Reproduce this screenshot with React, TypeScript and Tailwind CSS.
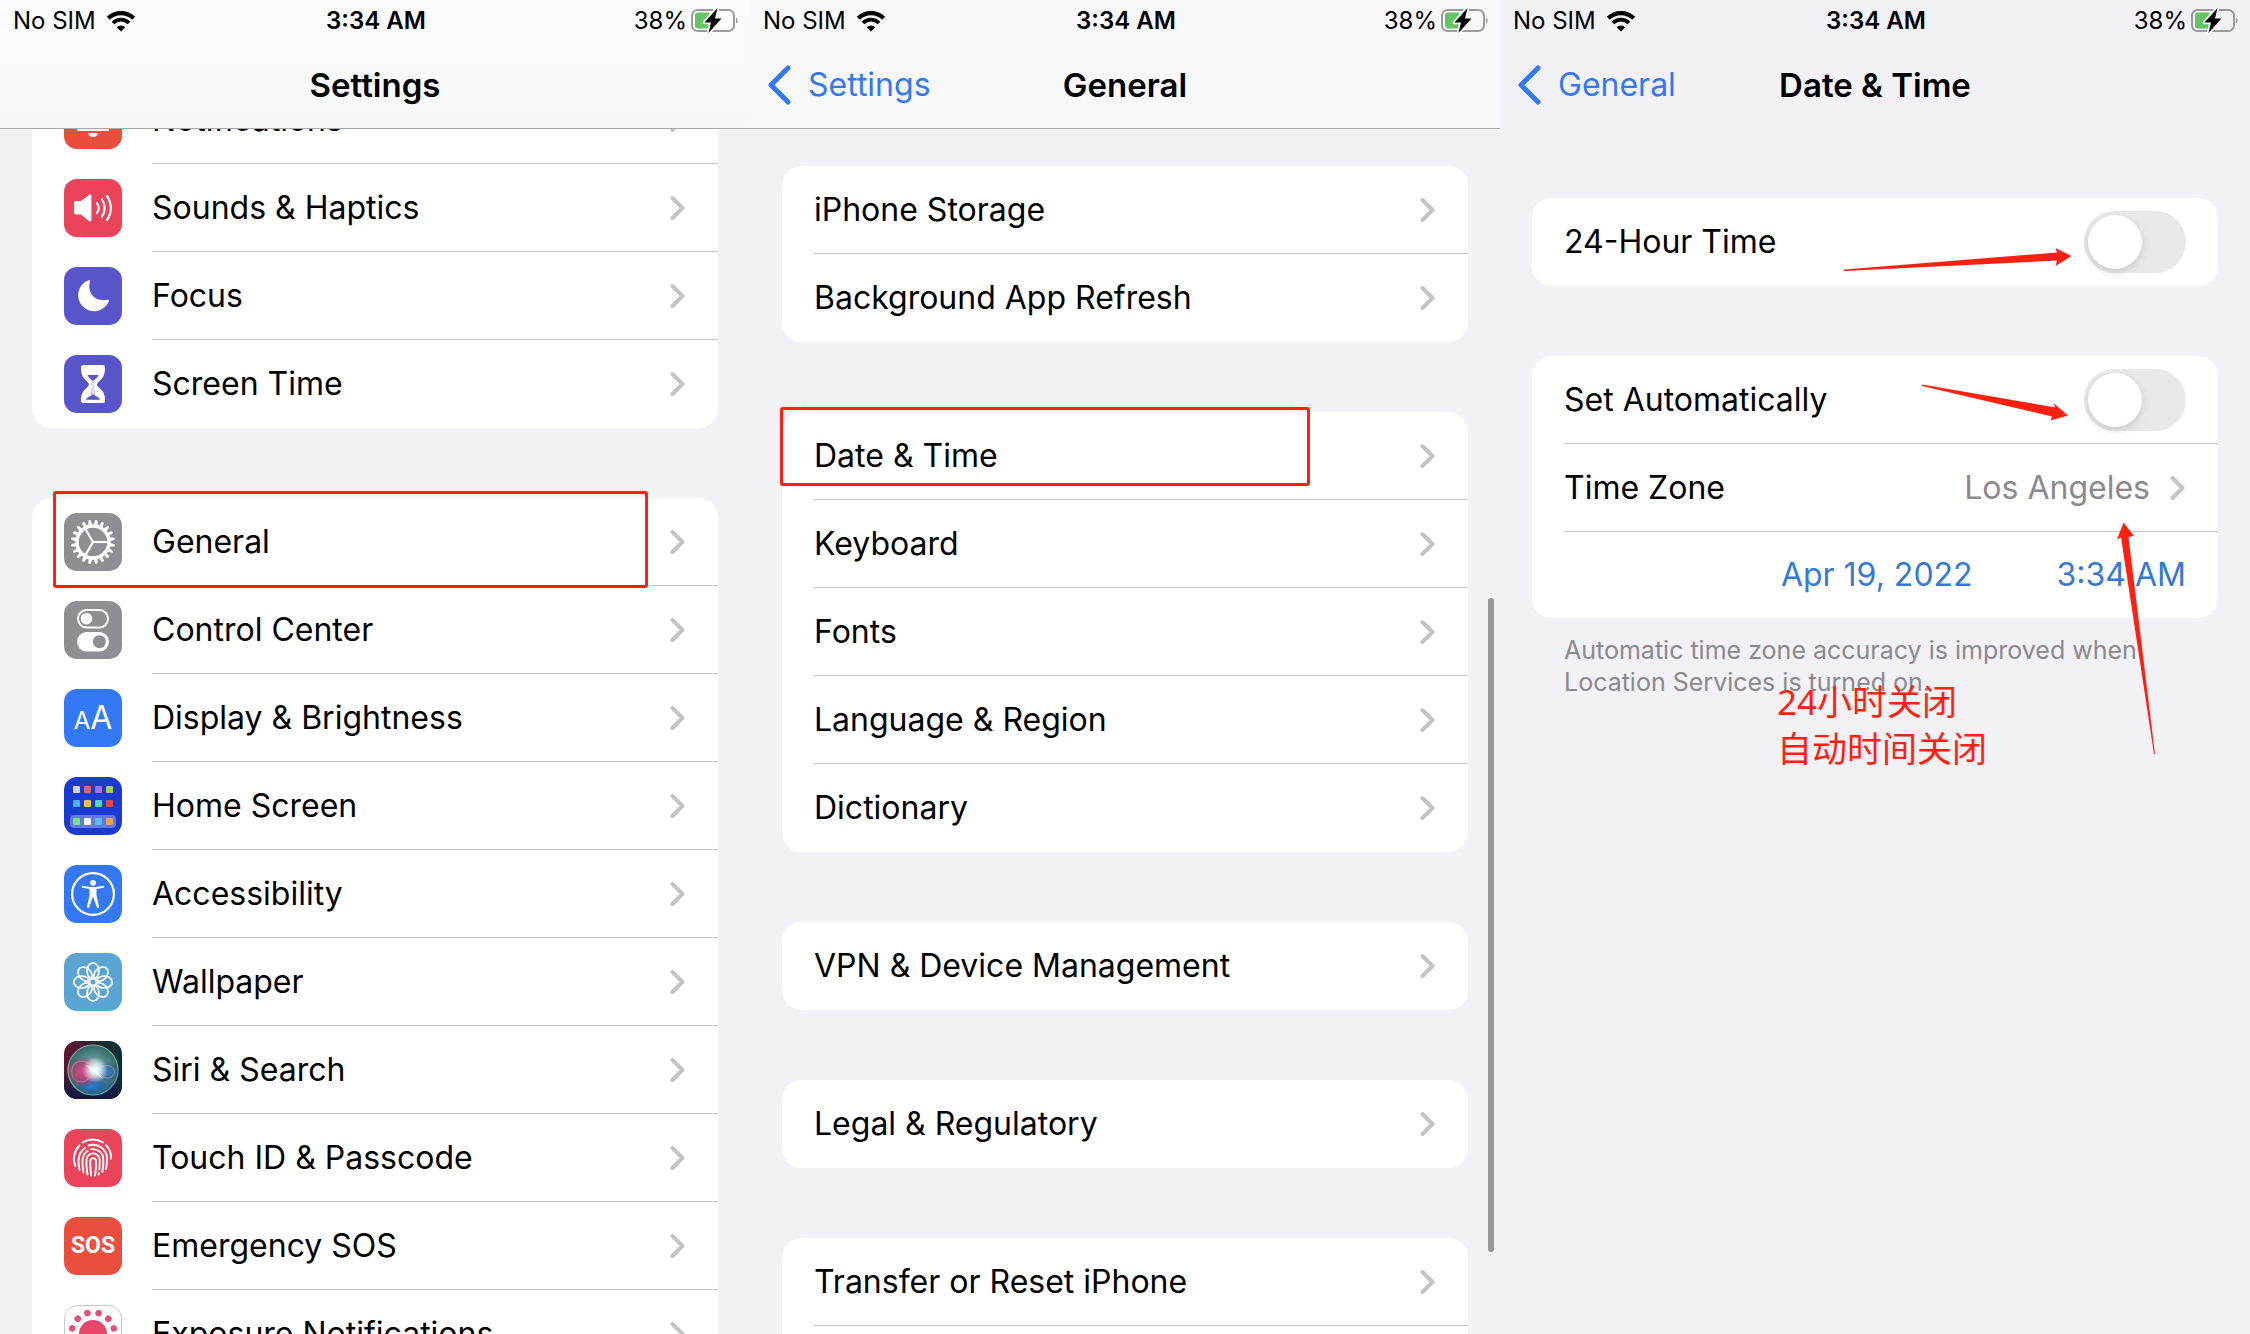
import React from "react";

const TEETH = Array.from({ length: 20 }, (_, i) => i * 18);
const PETALS = Array.from({ length: 8 }, (_, i) => i * 45);
const DOTS = Array.from({ length: 12 }, (_, i) => 15 + i * 30);
const APP_TILES = [
  ["#d3d6e6", "#ec5f6b", "#b06cf5", "#a9d052"],
  ["#4fb0f6", "#f8c23f", "#56d8a4", "#e8473f"],
  ["#74e97c", "#ffffff", "#58bdf2", "#f0a04f"],
];
const TILE_Y = [9, 23, 41];

function IconTile({ bg, children }: { bg: string; children?: React.ReactNode }) {
  return (
    <svg viewBox="0 0 58 58" className="size-[58px] shrink-0" aria-hidden="true" fill="none">
      <rect width="58" height="58" rx="13" fill={bg} />
      {children}
    </svg>
  );
}

const icons = {
  notifications: (
    <IconTile bg="#eb4d3d">
      <path d="M13 40v-3l5-6V23a11 11 0 0 1 22 0v8l5 6v3z" fill="#fff" />
      <path d="M24 42h10a5 4 0 0 1-10 0z" fill="#fff" />
    </IconTile>
  ),
  sounds: (
    <IconTile bg="#eb445a">
      <path d="M12 22h5l8-6c1-.8 2.400-.4 2.400 1v24c0 1.400-1.400 1.800-2.400 1l-8-6.500h-5c-1.400 0-2-.8-2-2V24c0-1.200.6-2 2-2z" fill="#fff" />
      <g stroke="#fff" strokeWidth="2.200" strokeLinecap="round">
        <path d="M33 24a9 9 0 0 1 0 10" />
        <path d="M38 20.500a15 15 0 0 1 0 17" />
        <path d="M43 17a21 21 0 0 1 0 24" />
      </g>
    </IconTile>
  ),
  focus: (
    <IconTile bg="#5855cb">
      <path d="M24.500 13.200c.9-.4 1.900.2 1.500 1.300-3.400 11.500 5.600 21 17.400 18.200 1.100-.3 1.900.5 1.500 1.600A16 16 0 1 1 24.500 13.200z" fill="#fff" />
    </IconTile>
  ),
  screenTime: (
    <IconTile bg="#5855cb">
      <path d="M19.500 10h19c1.700 0 2.500 1 2.500 2.500 0 7-2 10.500-5.500 13.500-3.300 2.800-3.300 4.200 0 7C39 36 41 39 41 45.500c0 1.700-.8 2.500-2.500 2.500h-19c-1.700 0-2.500-.8-2.500-2.500 0-6.500 2-9.500 5.500-12.500 3.300-2.800 3.300-4.200 0-7C19 23 17 19.500 17 12.500c0-1.500.8-2.500 2.500-2.500z" fill="#fff" />
      <path d="M23.500 20h11c-1 2.300-2.500 3.300-4.200 5-.5 5 0 11 .2 15.500 2.500 1.300 5 1.800 5.500 4.200H22c.5-2.400 3-2.900 5.500-4.200.2-4.500.7-10.500.2-15.500-1.700-1.700-3.200-2.700-4.200-5z" fill="#5855cb" />
      <path d="M29 25.500v14" stroke="#fff" strokeWidth="1.600" />
    </IconTile>
  ),
  general: (
    <IconTile bg="#8e8e93">
      <circle cx="29" cy="29" r="16" stroke="#fff" strokeWidth="3.400" />
      {TEETH.map((a) => (
        <path key={a} d="M26.900 13l.9-5.500c.2-.9 2.200-.9 2.400 0l.9 5.500z" fill="#fff" transform={`rotate(${a + 9} 29 29)`} />
      ))}
      {[0, 120, 240].map((a) => (
        <path key={a} d="M29 29h16" stroke="#fff" strokeWidth="2.200" transform={`rotate(${a} 29 29)`} />
      ))}
    </IconTile>
  ),
  controlCenter: (
    <IconTile bg="#8e8e93">
      <rect x="14" y="9" width="30" height="17.500" rx="8.750" stroke="#fff" strokeWidth="2" />
      <circle cx="22.500" cy="17.700" r="5.800" fill="#fff" />
      <rect x="13" y="31" width="32" height="19.500" rx="9.750" fill="#fff" />
      <circle cx="35.400" cy="40.700" r="6.500" fill="#8e8e93" />
    </IconTile>
  ),
  home: (
    <IconTile bg="#1a3bd2">
      <rect x="6" y="38" width="46" height="13" rx="4" fill="#fff" fillOpacity=".32" />
      {APP_TILES.map((row, r) =>
        row.map((c, i) => <rect key={`${r}-${i}`} x={9 + i * 11} y={TILE_Y[r]} width="7" height="7" rx="1.200" fill={c} />),
      )}
    </IconTile>
  ),
  accessibility: (
    <IconTile bg="#3478f6">
      <circle cx="29" cy="29" r="20.900" stroke="#fff" strokeWidth="2.200" />
      <circle cx="29" cy="17.800" r="2.900" fill="#fff" />
      <path d="M18.800 20.800c-1.200-.3-1.600 1.700-.3 2l7 1.300v6.500l-2.500 11c-.3 1.500 1.800 2 2.300.5l3.700-10.500 3.700 10.500c.5 1.500 2.600 1 2.300-.5l-2.500-11v-6.500l7-1.300c1.300-.3.900-2.300-.3-2L32 22.100h-6z" fill="#fff" />
    </IconTile>
  ),
  wallpaper: (
    <IconTile bg="#5ba5d4">
      {PETALS.map((a) => (
        <ellipse key={a} cx="29" cy="17.800" rx="6" ry="8" stroke="#fff" strokeWidth="1.700" transform={`rotate(${a} 29 29)`} />
      ))}
    </IconTile>
  ),
  siri: (
    <IconTile bg="url(#siriBase)">
      <defs>
        <linearGradient id="siriBase" x1="0" y1="0" x2="1" y2=".3">
          <stop offset="0" stopColor="#6c1030" />
          <stop offset=".55" stopColor="#1b2c33" />
          <stop offset="1" stopColor="#0d3038" />
        </linearGradient>
        <linearGradient id="siriShade" x1="0" y1="0" x2="0" y2="1">
          <stop offset=".5" stopColor="#14204a" stopOpacity="0" />
          <stop offset="1" stopColor="#15123c" />
        </linearGradient>
        <radialGradient id="siriOrb" cx=".5" cy=".5" r=".5">
          <stop offset="0" stopColor="#b9d8dc" />
          <stop offset=".5" stopColor="#5f8f90" />
          <stop offset="1" stopColor="#2f6a66" />
        </radialGradient>
        <linearGradient id="siriRing" x1="0" y1="0" x2="1" y2="1">
          <stop offset="0" stopColor="#c9839b" />
          <stop offset=".5" stopColor="#6fb7a4" />
          <stop offset="1" stopColor="#4a90d8" />
        </linearGradient>
        <radialGradient id="siriPink">
          <stop offset="0" stopColor="#cf4a86" />
          <stop offset=".6" stopColor="#b83a6c" stopOpacity=".75" />
          <stop offset="1" stopColor="#a83a62" stopOpacity="0" />
        </radialGradient>
        <radialGradient id="siriBlue">
          <stop offset="0" stopColor="#2f7fd0" />
          <stop offset="1" stopColor="#1b4c9c" stopOpacity="0" />
        </radialGradient>
        <radialGradient id="siriGlow">
          <stop offset="0" stopColor="#fff" />
          <stop offset=".35" stopColor="#e6fbff" stopOpacity=".85" />
          <stop offset="1" stopColor="#fff" stopOpacity="0" />
        </radialGradient>
      </defs>
      <rect width="58" height="58" rx="13" fill="url(#siriShade)" />
      <circle cx="29" cy="29" r="25" fill="url(#siriOrb)" />
      <ellipse cx="29" cy="43" rx="21" ry="13" fill="url(#siriBlue)" />
      <ellipse cx="27" cy="45" rx="15" ry="9" fill="url(#siriBlue)" />
      <ellipse cx="19" cy="31" rx="17" ry="15" fill="url(#siriPink)" />
      <ellipse cx="44" cy="31" rx="11" ry="10" fill="url(#siriBlue)" />
      <path d="M31 29C24 18 10 17 8 28s8 16 15 11 10-12 17-14 12 3 10 8-9 5-12 2-5-5-7-6z" stroke="#d9a0c4" strokeOpacity=".55" />
      <circle cx="31" cy="29" r="13" fill="url(#siriGlow)" />
      <path d="M22 24l9 4 8 10-10-7z" fill="#fff" fillOpacity=".8" />
      <circle cx="29" cy="29" r="25" stroke="url(#siriRing)" strokeWidth="1.200" />
    </IconTile>
  ),
  touchId: (
    <IconTile bg="#eb445a">
      <g stroke="#fff" strokeWidth="1.900" strokeLinecap="round">
        <path d="M18.500 13.500a19 19 0 0 1 20.500 0" />
        <path d="M42 16a18 18 0 0 1 5 13.500" />
        <path d="M15.500 16.500a18 18 0 0 0-4 20.500" />
        <path d="M15.500 41c-1-5-1.500-9-.5-13a14 14 0 0 1 6-9" />
        <path d="M24.500 16.500a14 14 0 0 1 18.500 13.500q0 5-1 10" />
        <path d="M19.500 43.500c-.8-5-1.500-9-.8-13.500a10.500 10.500 0 0 1 5-8" />
        <path d="M27 20.300a10.500 10.500 0 0 1 12.300 10.200q.2 6-1 12.500" />
        <path d="M23.500 45.500c-.8-6-1.500-10-1-14.500a6.600 6.600 0 0 1 13.200 0c0 4 0 7-.4 9.500" />
        <path d="M34.800 44l-.2 1.500" />
        <path d="M27 46.500c-.4-6-.9-10-.7-15a2.900 2.900 0 0 1 5.700 0c.2 4 .1 10-1 15" />
      </g>
    </IconTile>
  ),
  exposure: (
    <svg viewBox="0 0 58 58" className="size-[58px] shrink-0" aria-hidden="true">
      <rect x=".5" y=".5" width="57" height="57" rx="13" fill="#fff" stroke="#c6c6c8" />
      <circle cx="29" cy="29" r="14" fill="#e8476a" />
      {DOTS.map((a) => (
        <circle key={a} cx="29" cy="7.400" r="3.300" fill="#e2527f" transform={`rotate(${a} 29 29)`} />
      ))}
    </svg>
  ),
  display: (
    <span className="flex size-[58px] shrink-0 items-baseline justify-center rounded-[13px] bg-[#3478f6] leading-[58px] text-white" aria-hidden="true">
      <span className="text-2xl leading-[58px]">A</span>
      <span className="text-[32px] leading-[58px]">A</span>
    </span>
  ),
  sos: (
    <span
      className="flex size-[58px] shrink-0 items-center justify-center rounded-[13px] bg-[#eb4e3d] font-[Roboto,sans-serif] text-[23px] font-bold text-white"
      aria-hidden="true"
    >
      SOS
    </span>
  ),
};

function Wifi() {
  return (
    <svg viewBox="0 0 30 22" className="h-[22px] w-[30px]" aria-hidden="true" fill="none" stroke="#000">
      <path d="M2.300 8.300A18 18 0 0 1 27.700 8.300" strokeWidth="4.200" />
      <path d="M7 13A11.300 11.300 0 0 1 23 13" strokeWidth="3.800" />
      <path d="M15 21.500l-4.300-4.300a6 6 0 0 1 8.600 0z" fill="#000" stroke="none" />
    </svg>
  );
}

function Battery() {
  return (
    <svg viewBox="0 0 48 26" className="h-[26px] w-12" aria-hidden="true" fill="none">
      <rect x="1" y="2" width="42" height="21" rx="5.500" stroke="#9b9b9d" strokeWidth="2" />
      <path d="M45 9.500c2.200.8 2.200 5.200 0 6z" fill="#9b9b9d" />
      <path d="M7 4.500h11v16H7a3 3 0 0 1-3-3v-10a3 3 0 0 1 3-3z" fill="#65c466" />
      <path d="M26.500 0L13.500 14.500h6.500L17.500 25l13-14.500h-6.500z" fill="#000" stroke="#fafafa" strokeWidth="3.500" strokeLinejoin="round" paintOrder="stroke" />
    </svg>
  );
}

function StatusBar() {
  return (
    <div className="grid h-[42px] grid-cols-3 items-center pr-[11px] pl-[13px] text-2xl leading-10">
      <div className="flex items-center gap-2.5">
        <span>No SIM</span>
        <Wifi />
      </div>
      <time className="text-center font-semibold">3:34 AM</time>
      <div className="flex items-center justify-end gap-1">
        <span>38%</span>
        <Battery />
      </div>
    </div>
  );
}

function NavBar({ title, back }: { title: string; back?: string }) {
  return (
    <div className="grid h-[86px] grid-cols-[1fr_auto_1fr] items-center px-4">
      <div>
        {back && (
          <a href="#back" className="flex items-center gap-4 text-[32px] leading-10 text-[#3478f6]">
            <svg viewBox="0 0 26 40" className="h-10 w-[26px]" fill="none" stroke="currentColor" strokeWidth="5" strokeLinecap="round" strokeLinejoin="round" aria-hidden="true">
              <path d="M22 3L5 20l17 17" />
            </svg>
            {back}
          </a>
        )}
      </div>
      <h1 className="text-[33px] leading-10 font-semibold">{title}</h1>
    </div>
  );
}

function Chevron() {
  return (
    <svg viewBox="0 0 15 26" className="h-[26px] w-[15px] shrink-0" fill="none" stroke="#c4c4c6" strokeWidth="4" strokeLinecap="round" strokeLinejoin="round" aria-hidden="true">
      <path d="M2.500 3l10 10-10 10" />
    </svg>
  );
}

function LinkRow({ label, icon, value, boxed }: { label: string; icon?: React.ReactNode; value?: string; boxed?: React.ReactNode }) {
  return (
    <li className="group relative">
      <a href="#open" className="flex h-22 items-center pl-8">
        {icon && <span className="mr-[30px] flex">{icon}</span>}
        <span className="flex h-22 flex-1 items-center justify-between border-b border-[#c6c6c8] pr-[33px] group-last:border-transparent">
          <span className="whitespace-nowrap">{label}</span>
          <span className="flex items-center gap-5 text-[#8a8a8e]">
            {value}
            <Chevron />
          </span>
        </span>
      </a>
      {boxed}
    </li>
  );
}

function SwitchRow({ label, id }: { label: string; id: string }) {
  return (
    <li className="group pl-8">
      <div className="flex h-22 items-center justify-between border-b border-[#c6c6c8] pr-8 group-last:border-transparent">
        <label htmlFor={id}>{label}</label>
        <input
          id={id}
          type="checkbox"
          role="switch"
          className="h-[62px] w-[102px] appearance-none rounded-full bg-[#e9e9ea] p-1 before:block before:size-[54px] before:rounded-full before:bg-white before:shadow-[0_3px_8px_rgba(0,0,0,0.15)] checked:bg-[#65c466] checked:before:translate-x-10"
        />
      </div>
    </li>
  );
}

function Card({ children }: { children: React.ReactNode }) {
  return <ul className="rounded-[20px] bg-white text-[32px] leading-10">{children}</ul>;
}

function Arrows() {
  return (
    <svg viewBox="0 0 750 800" className="pointer-events-none absolute top-0 right-0 h-[800px] w-[750px]" fill="#ff2010" aria-hidden="true">
      <path d="M344 269.500L557 252.500L555.500 248L571.500 256L555.500 266L557 260.500L344 271z" />
      <path d="M422 384.500L555.500 407.500L553.500 403L568 415.500L550.500 420.500L552 416.500L422 386z" />
      <path d="M654 754L621 537.500L617 539.500L623.500 522.500L634 536L628.500 537L655 754z" />
    </svg>
  );
}

export default function App() {
  return (
    <main className="grid h-screen grid-cols-3 overflow-hidden bg-[#f2f1f6] font-[Inter,'Noto_Sans_CJK_SC',sans-serif] text-black">
      <section className="relative flex min-w-0 flex-col">
        <header className="relative z-10 border-b border-[#a9a9ad] bg-gradient-to-b from-[#fbfbfb] to-[#f7f7f7]">
          <StatusBar />
          <NavBar title="Settings" />
        </header>
        <div className="-mt-[53px] flex flex-col gap-[70px] px-8">
          <Card>
            <LinkRow label="Notifications" icon={icons.notifications} />
            <LinkRow label="Sounds & Haptics" icon={icons.sounds} />
            <LinkRow label="Focus" icon={icons.focus} />
            <LinkRow label="Screen Time" icon={icons.screenTime} />
          </Card>
          <Card>
            <LinkRow
              label="General"
              icon={icons.general}
              boxed={<span className="pointer-events-none absolute -top-[7px] right-[70px] -bottom-0.5 left-[21px] rounded-[3px] border-3 border-[#ff2010]" />}
            />
            <LinkRow label="Control Center" icon={icons.controlCenter} />
            <LinkRow label="Display & Brightness" icon={icons.display} />
            <LinkRow label="Home Screen" icon={icons.home} />
            <LinkRow label="Accessibility" icon={icons.accessibility} />
            <LinkRow label="Wallpaper" icon={icons.wallpaper} />
            <LinkRow label="Siri & Search" icon={icons.siri} />
            <LinkRow label="Touch ID & Passcode" icon={icons.touchId} />
            <LinkRow label="Emergency SOS" icon={icons.sos} />
            <LinkRow label="Exposure Notifications" icon={icons.exposure} />
          </Card>
        </div>
      </section>

      <section className="relative flex min-w-0 flex-col">
        <header className="relative z-10 border-b border-[#a9a9ad] bg-[#f8f8f8]">
          <StatusBar />
          <NavBar title="General" back="Settings" />
        </header>
        <div className="mt-[37px] flex flex-col gap-[70px] px-8">
          <Card>
            <LinkRow label="iPhone Storage" />
            <LinkRow label="Background App Refresh" />
          </Card>
          <Card>
            <LinkRow
              label="Date & Time"
              boxed={<span className="pointer-events-none absolute -top-[5px] right-[158px] bottom-3.5 -left-0.5 rounded-[3px] border-3 border-[#ff2010]" />}
            />
            <LinkRow label="Keyboard" />
            <LinkRow label="Fonts" />
            <LinkRow label="Language & Region" />
            <LinkRow label="Dictionary" />
          </Card>
          <Card>
            <LinkRow label="VPN & Device Management" />
          </Card>
          <Card>
            <LinkRow label="Legal & Regulatory" />
          </Card>
          <Card>
            <LinkRow label="Transfer or Reset iPhone" />
            <LinkRow label="Shut Down" />
          </Card>
        </div>
        <span className="absolute top-[598px] right-1.5 h-[654px] w-1.5 rounded-full bg-[#98979c]" />
      </section>

      <section className="relative flex min-w-0 flex-col">
        <header>
          <StatusBar />
          <NavBar title="Date & Time" back="General" />
        </header>
        <div className="mt-[70px] flex flex-col gap-[70px] px-8">
          <Card>
            <SwitchRow label="24-Hour Time" id="hour24" />
          </Card>
          <div>
            <Card>
              <SwitchRow label="Set Automatically" id="auto" />
              <LinkRow label="Time Zone" value="Los Angeles" />
              <li className="flex h-[86px] items-center justify-end gap-[84px] pr-8 text-[#3478d8]">
                <button type="button">Apr 19, 2022</button>
                <button type="button">3:34 AM</button>
              </li>
            </Card>
            <p className="mt-4 max-w-[660px] pl-8 text-[25px] leading-8 text-[#8a8a8e]">
              Automatic time zone accuracy is improved when Location Services is turned on.
            </p>
          </div>
        </div>
        <Arrows />
        <p className="absolute top-[678px] left-[277px] font-['Noto_Sans','Noto_Sans_CJK_SC',sans-serif] text-[35px] leading-[47px] whitespace-nowrap text-[#ff2010]">
          24小时关闭
          <br />
          自动时间关闭
        </p>
      </section>
    </main>
  );
}
